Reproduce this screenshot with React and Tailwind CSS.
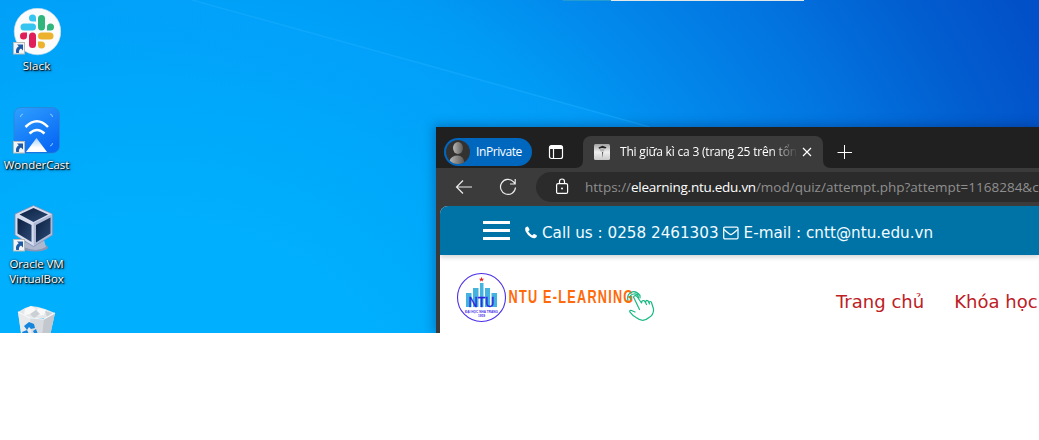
import React from "react";
import { FaPhone } from "react-icons/fa6";

const LABEL =
  "text-center font-['Open_Sans','Noto_Sans',sans-serif] text-[11.5px] leading-[15px] text-white [text-shadow:1px_1px_1px_rgba(0,0,0,0.95),0_0_2px_rgba(0,0,0,0.8),1px_1px_3px_rgba(0,0,0,0.7)]";

function Wallpaper() {
  return (
    <svg className="absolute inset-0" width="1039" height="333" viewBox="0 0 1039 333" aria-hidden="true">
      <defs>
        <radialGradient id="sky" gradientUnits="userSpaceOnUse" cx="150" cy="500" r="1000">
          <stop offset="0.28" stopColor="#00affd" />
          <stop offset="0.42" stopColor="#00a7fa" />
          <stop offset="0.5" stopColor="#00a1f8" />
          <stop offset="0.56" stopColor="#009bf4" />
          <stop offset="0.65" stopColor="#028aec" />
          <stop offset="0.79" stopColor="#0273df" />
          <stop offset="0.9" stopColor="#025fd0" />
          <stop offset="1" stopColor="#0250c8" />
        </radialGradient>
        <linearGradient id="ray" gradientUnits="userSpaceOnUse" x1="420" y1="63" x2="398" y2="142">
          <stop offset="0" stopColor="#08a0ff" stopOpacity="0.3" />
          <stop offset="1" stopColor="#08a0ff" stopOpacity="0" />
        </linearGradient>
      </defs>
      <rect width="1039" height="333" fill="url(#sky)" />
      <path d="M192 0L650 127V128H436V220L0 100V0Z" fill="url(#ray)" />
      <path d="M192 0L650 127" stroke="#19adff" strokeOpacity="0.5" strokeWidth="1.6" />
    </svg>
  );
}

function ShortcutArrow() {
  return (
    <g>
      <rect x="0.5" y="34.5" width="11" height="11.5" fill="#f4f4f4" stroke="#b9b9b9" />
      <path d="M4 36.5H10V42.5L8 40.5C6.300 41.500 5.800 42.800 5.900 45H3.200C2.500 42 3.300 39.900 5.800 38.300Z" fill="#1d5aa5" />
    </g>
  );
}

function SlackIcon() {
  return (
    <svg width="48" height="48" viewBox="0 0 48 48">
      <circle cx="24.500" cy="23.500" r="23.300" fill="#fbfbfb" stroke="#c9dbe6" strokeWidth="0.6" />
      <g fill="#36c5f0">
        <rect x="7.500" y="15.500" width="15.500" height="7" rx="3.500" />
        <path d="M23 13.500H19.500A3.500 3.500 0 1 1 23 10Z" />
      </g>
      <g fill="#2eb67d">
        <rect x="25" y="7" width="7" height="15.500" rx="3.500" />
        <path d="M34 22.500V19A3.500 3.500 0 1 1 37.500 22.500Z" />
      </g>
      <g fill="#ecb22e">
        <rect x="25" y="24.500" width="15.500" height="7" rx="3.500" />
        <path d="M25 33.500H28.500A3.500 3.500 0 1 1 25 37Z" />
      </g>
      <g fill="#e01e5a">
        <rect x="16" y="24.500" width="7" height="15.500" rx="3.500" />
        <path d="M14 24.500V28A3.500 3.500 0 1 1 10.500 24.500Z" />
      </g>
      <ShortcutArrow />
    </svg>
  );
}

function WonderCastIcon() {
  return (
    <svg width="48" height="48" viewBox="0 0 48 48">
      <defs>
        <linearGradient id="wc" x1="0" y1="0" x2="0.6" y2="1">
          <stop offset="0" stopColor="#2fa0ff" />
          <stop offset="1" stopColor="#0869f5" />
        </linearGradient>
        <linearGradient id="beam" x1="0" y1="0" x2="0" y2="1">
          <stop offset="0" stopColor="#a9d1ff" />
          <stop offset="0.7" stopColor="#ffffff" />
        </linearGradient>
      </defs>
      <rect x="1" y="0.500" width="45.500" height="45.500" rx="7" fill="url(#wc)" stroke="#2b84ce" strokeWidth="0.7" />
      <path d="M12.500 20Q24 8.500 35 20M16.500 26.500Q24 19.500 31.500 26.500" fill="none" stroke="#fff" strokeWidth="2.500" />
      <path d="M23.500 31L34 45H13Z" fill="url(#beam)" />
      <path d="M7.500 10Q7.500 7.500 10 7M37 7Q39.500 7.500 39.500 10M39.500 36Q39.500 38.500 37 39" fill="none" stroke="#8bcbff" strokeWidth="1" />
      <ShortcutArrow />
    </svg>
  );
}

function VirtualBoxIcon() {
  return (
    <svg width="48" height="48" viewBox="0 0 48 48">
      <defs>
        <linearGradient id="vbf" x1="0" y1="0" x2="1" y2="1">
          <stop offset="0" stopColor="#0c203f" />
          <stop offset="1" stopColor="#2c4a76" />
        </linearGradient>
      </defs>
      <ellipse cx="22" cy="42.500" rx="13" ry="4" fill="#8997b6" />
      <path d="M13 35H31L33 42Q23 48 11 42Z" fill="#aeb8cf" />
      <path d="M20.500 0.500L39.500 9V30L20.500 41.500L2 30V9Z" fill="#d5dcee" stroke="#7f8eb5" strokeWidth="0.800" />
      <path d="M20.700 18V41L39.500 30V9Z" fill="#8090b8" fillOpacity="0.45" />
      <path d="M20.500 3L35 9.500L20.500 17L6.500 9.500Z" fill="url(#vbf)" />
      <path d="M4.500 13L18.500 20V37L4.500 28.500Z" fill="url(#vbf)" />
      <path d="M23 20L37.500 12.500V28.500L23 37.500Z" fill="url(#vbf)" />
      <ShortcutArrow />
    </svg>
  );
}

function RecycleBinIcon() {
  return (
    <svg width="48" height="48" viewBox="0 0 48 48">
      <path d="M5 6L12 2L18 0L25 1L32 3L42 7L37 12H10Z" fill="#e5e7e8" />
      <path d="M12 3L18 0L23 3L18 8L11 9ZM25 2L33 4L31 9L22 10Z" fill="#f9f9f9" />
      <path d="M17 8L23 4L27 8L21 12ZM32 5L39 7L34 11Z" fill="#cbd0d4" />
      <path d="M5 6L11 48H33L42 7L31 13L17 12Z" fill="#d7dbdf" />
      <path d="M5 6L17 12L21 48H11Z" fill="#e8eaec" />
      <path d="M31 13L42 7L33 48H27Z" fill="#c2c8cd" />
      <path d="M5 6L17 12L31 13L42 7" fill="none" stroke="#f5f7f8" strokeWidth="1.200" />
      <g fill="#1686dc">
        <path d="M11 20L16 16L21 18L22 22L18 23L16 21L14 24Z" />
        <path d="M9 26L14 24L16 28L14 31H11Z" />
        <path d="M20 25L23 23L26 31H19V27H21Z" />
      </g>
    </svg>
  );
}

function DesktopIcons() {
  return (
    <div className="relative flex w-[73px] flex-col">
      <div className="flex h-[99px] flex-col items-center pt-[8px]">
        <SlackIcon />
        <span className={LABEL + " mt-[2px] tracking-[0.1px]"}>Slack</span>
      </div>
      <div className="flex h-[99px] flex-col items-center pt-[8px]">
        <WonderCastIcon />
        <span className={LABEL + " mt-[2px] whitespace-nowrap tracking-[-0.05px]"}>WonderCast</span>
      </div>
      <div className="flex h-[99px] flex-col items-center pt-[7px]">
        <VirtualBoxIcon />
        <span className={LABEL + " mt-[3px] whitespace-nowrap tracking-[-0.1px]"}>
          Oracle VM
          <br />
          VirtualBox
        </span>
      </div>
      <div className="flex flex-col items-center pt-[9px]">
        <RecycleBinIcon />
      </div>
    </div>
  );
}

function Avatar() {
  return (
    <svg width="24" height="24" viewBox="0 0 24 24" className="shrink-0">
      <defs>
        <linearGradient id="person" x1="0" y1="0" x2="1" y2="0">
          <stop offset="0" stopColor="#b9b7b5" />
          <stop offset="1" stopColor="#5b5958" />
        </linearGradient>
        <clipPath id="disc">
          <circle cx="12" cy="12" r="12" />
        </clipPath>
      </defs>
      <g clipPath="url(#disc)">
        <rect width="24" height="24" fill="#333231" />
        <ellipse cx="12" cy="8" rx="5" ry="6" fill="url(#person)" />
        <path d="M3.500 24V21Q5 15.500 12 15.500Q17 16 18 21V24Z" fill="url(#person)" />
      </g>
    </svg>
  );
}

function TabStrip() {
  return (
    <div className="flex h-[41px] items-end bg-[#202020] pl-[8px]">
      <div className="mb-[2px] flex h-[28px] w-[88px] items-center rounded-full bg-[#0067bf] pl-[2px]">
        <Avatar />
        <span className="ml-[6px] text-[12px] leading-none tracking-[-0.4px] text-white">InPrivate</span>
      </div>
      <svg width="16" height="16" viewBox="0 0 16 16" className="mb-[8px] ml-[16px] shrink-0">
        <rect x="1.500" y="1.500" width="13" height="13" rx="2" fill="none" stroke="#fff" strokeWidth="1.200" />
        <path d="M1.500 3.500Q1.500 1.500 3.500 1.500H12.500Q14.500 1.500 14.500 3.500V5H1.500Z" fill="#fff" />
        <path d="M5.500 5V14" stroke="#fff" strokeWidth="1.200" />
      </svg>
      <svg width="8" height="8" viewBox="0 0 8 8" className="ml-[11px] shrink-0">
        <path d="M0 8H8V0Q8 8 0 8Z" fill="#3b3b3b" />
      </svg>
      <div className="flex h-[32px] w-[240px] shrink-0 items-center rounded-t-[8px] bg-[#3b3b3b] pl-[11px]">
        <svg width="16" height="16" viewBox="0 0 16 16" className="shrink-0">
          <defs>
            <linearGradient id="fav" x1="0" y1="0" x2="0" y2="1">
              <stop offset="0" stopColor="#a2a2a2" />
              <stop offset="0.5" stopColor="#eee" />
              <stop offset="1" stopColor="#c9c9c9" />
            </linearGradient>
          </defs>
          <rect width="16" height="16" rx="1.500" fill="url(#fav)" />
          <path d="M4.500 3.500L8.500 1.800L12.500 3.200L11.500 4.500L8 4L5 4.800Z" fill="#222" />
          <path d="M5.500 5L8 4.500L10.500 5L10 7.500H6.500Z" fill="#b5b5b5" />
          <path d="M8 8H9.200L8.500 14Z" fill="#555" />
        </svg>
        <span className="ml-[10px] w-[176px] whitespace-nowrap text-[12px] leading-[18px] tracking-[-0.2px] text-white [mask-image:linear-gradient(to_right,#000_150px,transparent_178px)]">
          Thi giữa kì ca 3 (trang 25 trên tổn
        </span>
        <svg width="10" height="10" viewBox="0 0 10 10" className="ml-[6px] shrink-0">
          <path d="M1 1L9 9M9 1L1 9" stroke="#fff" strokeWidth="1.200" />
        </svg>
      </div>
      <svg width="8" height="8" viewBox="0 0 8 8" className="shrink-0">
        <path d="M8 8H0V0Q0 8 8 8Z" fill="#3b3b3b" />
      </svg>
      <svg width="15" height="14" viewBox="0 0 15 14" className="mb-[9px] ml-[6px] shrink-0">
        <path d="M7.500 0V14M0.500 7.500H15" stroke="#fff" strokeWidth="1" />
      </svg>
    </div>
  );
}

function Toolbar() {
  return (
    <div className="flex h-[38px] items-center bg-[#3b3b3b] pl-[19px]">
      <svg width="18" height="16" viewBox="0 0 18 16" className="shrink-0">
        <path d="M17 8H1.500M8 1.500L1.500 8L8 14.500" fill="none" stroke="#ececec" strokeWidth="1.200" />
      </svg>
      <svg width="18" height="18" viewBox="0 0 18 18" className="ml-[26px] shrink-0">
        <path d="M16.500 9.500A7.500 7.500 0 1 1 14.500 3.800L16 5.500M16.200 1V6H11" fill="none" stroke="#ececec" strokeWidth="1.200" />
      </svg>
      <div className="ml-[19px] flex h-[30px] flex-1 items-center rounded-l-full bg-[#2b2b2b] pl-[19px]">
        <svg width="14" height="17" viewBox="0 0 14 17" className="mb-px shrink-0">
          <rect x="1.600" y="5.600" width="11" height="9.800" rx="1.500" fill="none" stroke="#fff" strokeWidth="1.200" />
          <path d="M4.500 5.500V3.500Q4.500 1 7 1T9.500 3.500V5.500" fill="none" stroke="#fff" strokeWidth="1.200" />
          <circle cx="7" cy="10.500" r="1" fill="#fff" />
        </svg>
        <span className="ml-[16px] whitespace-nowrap text-[13.5px] leading-[20px] text-[#8f8f8f]">
          https://<span className="tracking-[-0.26px] text-white">elearning.ntu.edu.vn</span>
          /mod/quiz/attempt.php?attempt=1168284&amp;c
        </span>
      </div>
    </div>
  );
}

function Logo() {
  return (
    <svg width="200" height="52" viewBox="0 0 200 52" className="shrink-0">
      <circle cx="25.500" cy="25.500" r="24" fill="#fff" stroke="#4a2fe8" strokeWidth="1.100" />
      <path d="M25.500 4.800L26.200 6.700H28.200L26.600 7.900L27.200 9.800L25.500 8.600L23.800 9.800L24.400 7.900L22.800 6.700H24.800Z" fill="#e12222" />
      <path d="M10 35V21H15.500V35ZM17 35V16H22.500V35ZM24 35V11H27.500V35ZM29 35V16H34V35ZM35.500 35V21H41V35Z" fill="#45b3df" />
      <text x="12.500" y="35" textLength="26" lengthAdjust="spacingAndGlyphs" fontFamily="Liberation Sans, sans-serif" fontSize="14" fill="#2d1fe0" stroke="#2d1fe0" strokeWidth="0.300">NTU</text>
      <text x="9" y="40.500" textLength="33" lengthAdjust="spacingAndGlyphs" fontFamily="Liberation Sans, sans-serif" fontWeight="700" fontSize="4.300" fill="#4a2fe8">ĐẠI HỌC NHA TRANG</text>
      <text x="22" y="45" textLength="7" lengthAdjust="spacingAndGlyphs" fontFamily="Liberation Sans, sans-serif" fontWeight="700" fontSize="3.500" fill="#4a2fe8">1959</text>
      <text x="52.500" y="31" textLength="126" lengthAdjust="spacingAndGlyphs" letterSpacing="1.800" fontFamily="Liberation Sans, sans-serif" fontWeight="700" fontSize="18.500" fill="#ff6a0a">NTU E-LEARNING</text>
    </svg>
  );
}

function HandCursor() {
  return (
    <svg width="28" height="30" viewBox="0 0 28 30" className="absolute left-[187px] top-[36px]">
      <g fill="none" stroke="#18b981" strokeWidth="1.200" strokeLinecap="round" strokeLinejoin="round">
        <path d="M8 21L4.500 19.500Q2.500 19 2.800 20.800Q6 25 9.500 26.800Q16 32 22 26.500Q27 23.500 26.500 18L24.500 11.500Q23.500 9.500 22 11.500Q21 9 19.200 9.500L18.500 11.500Q17 8.500 15 10L14.500 12L10 5.500Q8 3.500 6.500 6L12.500 18.500" fill="none" />
        <path d="M18.500 11.500L19.500 13.500M22 11.500L22.500 13" />
        <path d="M3.500 8.500Q2.200 3.500 6.500 3T11.500 6.500M1 9.500Q-0.500 4 4 1.500T13 4.500V7" />
      </g>
    </svg>
  );
}

function EnvelopeIcon() {
  return (
    <svg width="16" height="14" viewBox="0 0 16 14" className="ml-[4px] mr-[5px] shrink-0">
      <g fill="none" stroke="#f2fbff" strokeWidth="1.300" strokeLinejoin="round">
        <rect x="0.700" y="1.200" width="14.300" height="11.600" rx="1.200" />
        <path d="M1 3.500Q4 6.300 6.500 8Q7.850 9 9.200 8Q11.700 6.300 14.700 3.500" />
      </g>
    </svg>
  );
}

function SitePage() {
  return (
    <div className="relative ml-[4px] flex-1 overflow-hidden rounded-tl-[8px] bg-white">
      <div className="relative flex h-[49px] items-center bg-[#0073a6] pl-[43px] shadow-[0_2px_5px_rgba(0,0,0,0.18)]">
        <div className="flex w-[27px] flex-col gap-[5px]">
          <i className="h-[3px] bg-white" />
          <i className="h-[3px] bg-white" />
          <i className="h-[3px] bg-white" />
        </div>
        <div className="ml-[15px] mt-[4px] flex items-center whitespace-nowrap font-['DejaVu_Sans',sans-serif] text-[15.2px] leading-[20px] text-[#f2fbff]">
          <svg width="12" height="13" viewBox="0 0 12 13" className="mr-[4px] shrink-0">
            <path d="M0.300 2Q0.700 0.700 2.600 0.500Q3.200 0.500 4.500 3.400Q4.800 4 3.400 5.100Q3.200 5.500 3.600 6.100Q5 8.200 6.900 9.200Q7.400 9.400 7.700 9Q8.700 7.800 9.200 8Q12 9.300 12 9.800Q11.700 11.700 10.200 12.100Q8.500 12.700 6 11.200Q2.300 9 0.700 5.500Q-0.100 3.500 0.300 2Z" fill="#fff" />
          </svg>
          <span className="ml-px">Call us : 0258 2461303</span>
          <EnvelopeIcon />
          <span>E-mail : cntt@ntu.edu.vn</span>
        </div>
      </div>
      <div className="relative flex h-[78px] items-start pl-[16px] pt-[17px]">
        <Logo />
        <HandCursor />
        <nav className="ml-[180px] mt-[18px] flex gap-[30px] whitespace-nowrap font-['DejaVu_Sans',sans-serif] text-[18px] leading-[24px] tracking-[0.02px] text-[#bd2025]">
          <span>Trang chủ</span>
          <span>Khóa học</span>
        </nav>
      </div>
    </div>
  );
}

function BrowserWindow() {
  return (
    <div className="absolute left-[436px] top-[127px] flex h-[206px] w-[603px] flex-col overflow-hidden bg-[#3b3b3b] font-['Open_Sans','Noto_Sans',sans-serif]">
      <TabStrip />
      <Toolbar />
      <SitePage />
    </div>
  );
}

export default function App() {
  return (
    <main className="h-[440px] w-[1039px] overflow-hidden bg-white">
      <div className="relative h-[333px] overflow-hidden">
        <Wallpaper />
        <div className="absolute left-[563px] top-0 flex h-px w-[241px]">
          <i className="w-[48px] bg-[#249bd1]" />
          <i className="flex-1 bg-[#e2e7e8]" />
        </div>
        <DesktopIcons />
        <div className="absolute left-[436px] top-[127px] h-[206px] w-[603px] shadow-[0_0_10px_2px_rgba(0,30,90,0.35)]" />
        <BrowserWindow />
      </div>
    </main>
  );
}
